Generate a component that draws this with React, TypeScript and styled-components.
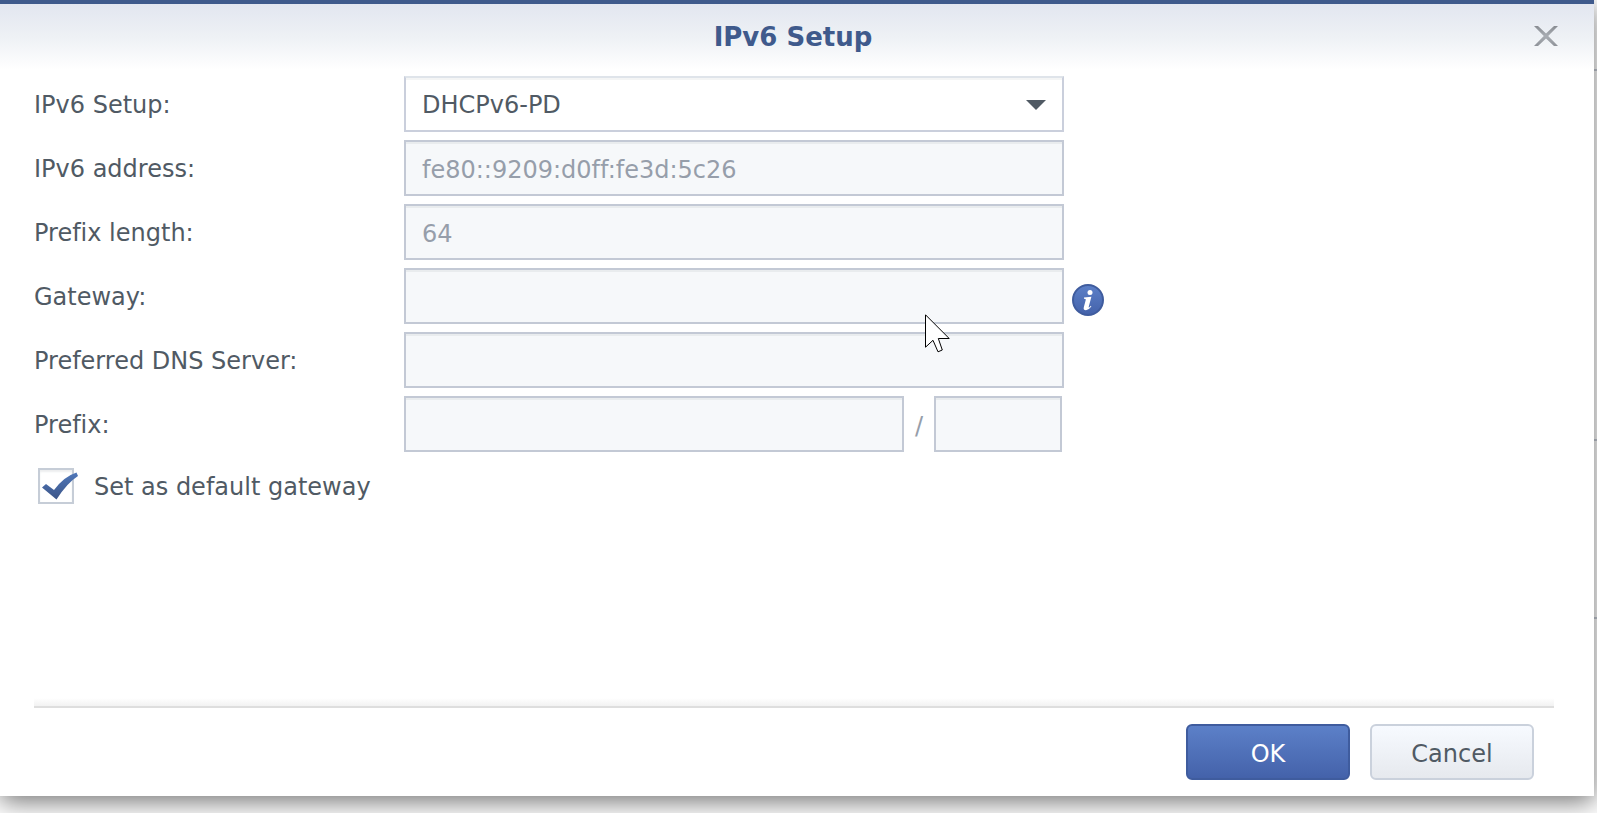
import React, { useState } from "react";
import styled, { createGlobalStyle, css } from "styled-components";

const GlobalStyle = createGlobalStyle`
  *, *::before, *::after { box-sizing: border-box; }
  body {
    margin: 0;
    background: #fff;
    color: #505a64;
    font-family: Verdana, "DejaVu Sans", sans-serif;
    font-size: 24px;
    line-height: 32px;
    font-variant-ligatures: none;
  }
  button, input, select { font: inherit; font-variant-ligatures: none; }
`;

const Page = styled.div`
  display: flex;
  min-height: 100vh;
  padding-bottom: 17px;
  overflow: hidden;
`;

const Dialog = styled.section`
  position: relative;
  z-index: 1;
  flex: 1;
  min-width: 0;
  display: flex;
  flex-direction: column;
  background: #fff;
  border-top: 4px solid #3f5a8c;
  box-shadow: 0 6px 24px rgba(0, 0, 0, 0.54);
`;

/* The sliver of the covered window that shows beside the dialog. */
const Backdrop = styled.div`
  width: 3px;
  display: flex;
  flex-direction: column;
`;

const BackdropSection = styled.div<{ $grow: number }>`
  flex: ${(p) => p.$grow} 0 0;
  border-bottom: 2px solid #c6ccd6;
  &:last-child { border-bottom: 0; }
`;

const Header = styled.header`
  display: grid;
  grid-template-columns: 72px 1fr 64px;
  align-items: center;
  height: 66px;
  padding: 0 16px 2px 0;
  background: linear-gradient(#e2e6f0, #eef1f5 50%, #fff);
`;

const Title = styled.h1`
  grid-column: 2;
  margin: 0;
  padding-top: 2px;
  color: #3f5a8c;
  font-size: 26px;
  line-height: 32px;
  text-align: center;
`;

const CloseButton = styled.button`
  display: flex;
  justify-content: center;
  padding: 8px;
  border: 0;
  background: none;
  cursor: pointer;
`;

const Form = styled.form`
  flex: 1;
  display: flex;
  flex-direction: column;
`;

const Fields = styled.div`
  position: relative;
  display: grid;
  grid-template-columns: 370px minmax(0, 660px) auto;
  row-gap: 8px;
  padding: 6px 40px 0 34px;
  justify-content: start;
`;

const Label = styled.label`
  grid-column: 1;
  align-self: center;
  padding-top: 2px;
`;

const control = css`
  width: 100%;
  height: 56px;
  padding: 4px 16px 0;
  border: 2px solid #c3c9d5;
  border-radius: 0;
  outline: 0;
`;

const TextField = styled.input`
  ${control}
  background: #f6f8fa;
  color: #969eaa;
  box-shadow: inset 0 2px #e9ecee;
`;

const SelectWrap = styled.div`
  position: relative;
`;

const Select = styled.select`
  ${control}
  display: block;
  padding-top: 2px;
  appearance: none;
  background: #fff;
  color: #505a64;
  border-color: #dfe4ea #cacfdc #cacfdc;
  box-shadow: inset 0 2px #f4f5f5;
`;

const Arrow = styled.svg`
  position: absolute;
  right: 18px;
  top: 24px;
  pointer-events: none;
`;

const PrefixGroup = styled.div`
  display: grid;
  grid-template-columns: 1fr 30px 128px;
  align-items: center;
  padding-right: 2px;
  color: #969eaa;
  text-align: center;
`;

const Slash = styled.span`
  padding-top: 4px;
`;

const InfoButton = styled.button`
  align-self: center;
  display: flex;
  margin: 8px 0 0 8px;
  padding: 0;
  border: 0;
  background: none;
`;

const CheckRow = styled.label`
  display: flex;
  align-items: center;
  gap: 20px;
  align-self: flex-start;
  margin: 16px 0 0 38px;
  height: 36px;
`;

const CheckText = styled.span`
  padding-top: 2px;
`;

const CheckBox = styled.span`
  position: relative;
  width: 36px;
  height: 36px;
  svg { position: absolute; left: 4px; top: 4px; pointer-events: none; }
  input:not(:checked) + svg { display: none; }
`;

const CheckInput = styled.input`
  display: block;
  width: 36px;
  height: 36px;
  margin: 0;
  appearance: none;
  border: 2px solid #c6cdd7;
  background: #fff;
  box-shadow: inset 0 2px 2px #eceeef;
`;

const Footer = styled.footer`
  margin: auto 40px 0 34px;
  padding: 0 20px 16px 0;
  display: flex;
  flex-wrap: wrap;
  justify-content: flex-end;
  gap: 16px 20px;
  &::before {
    content: "";
    flex: 0 0 calc(100% + 20px);
    height: 10px;
    margin-right: -20px;
    border-bottom: 2px solid #dedede;
    background: linear-gradient(#fff, #f2f2f2);
  }
`;

const Button = styled.button<{ $primary?: boolean }>`
  width: 164px;
  height: 56px;
  padding: 4px 0 0;
  border: 2px solid ${(p) => (p.$primary ? "#3f5c9e" : "#cad1dc")};
  border-radius: 6px;
  background: ${(p) =>
    p.$primary ? "linear-gradient(#5c80c8, #4462aa)" : "linear-gradient(#f7faff, #e6e9ee)"};
  color: ${(p) => (p.$primary ? "#fff" : "#505a64")};
`;

const Pointer = styled.svg`
  position: absolute;
  left: 925px;
  top: 244px;
  pointer-events: none;
`;

function CloseIcon() {
  return (
    <svg width="24" height="20" viewBox="0 0 24 20" aria-hidden="true">
      <defs>
        <linearGradient id="close" x1="0" y1="0" x2="0" y2="1">
          <stop offset="0" stopColor="#888c92" />
          <stop offset="0.5" stopColor="#a9adb3" />
          <stop offset="1" stopColor="#8f9399" />
        </linearGradient>
      </defs>
      <path
        d="M0 0H4L12 7.6 20 0H24L14.2 10 24 20H20L12 12.4 4 20H0L9.8 10Z"
        fill="url(#close)"
      />
    </svg>
  );
}

function InfoIcon() {
  return (
    <svg width="32" height="32" viewBox="0 0 32 32" aria-hidden="true">
      <defs>
        <linearGradient id="info" x1="0" y1="0" x2="0" y2="1">
          <stop offset="0" stopColor="#5c80c8" />
          <stop offset="1" stopColor="#4462aa" />
        </linearGradient>
      </defs>
      <circle cx="16" cy="16" r="15" fill="url(#info)" stroke="#3f5c9e" strokeWidth="2" />
      <circle cx="18" cy="8.4" r="2.5" fill="#fff" />
      <path
        d="M12 13.6 19.4 12.8 16.8 22.4Q16.4 24 17.2 23.4L18.8 21.8 19.4 22.6Q16.8 26.2 14 26.2 11 26.2 11.8 23.2L13.8 15.8Q14 14.8 12 14.8Z"
        fill="#fff"
      />
    </svg>
  );
}

function CheckIcon() {
  return (
    <svg width="36" height="28" viewBox="0 0 36 28" aria-hidden="true">
      <defs>
        <linearGradient id="check" x1="0" y1="0" x2="0" y2="1">
          <stop offset="0" stopColor="#5078ba" />
          <stop offset="1" stopColor="#3c5588" />
        </linearGradient>
      </defs>
      <path
        d="M0 15.5 4 12 12 18Q22 4.5 34.5 0.5L36 4Q25 11 14.5 27.5Z"
        fill="url(#check)"
      />
    </svg>
  );
}

export default function App() {
  const [mode, setMode] = useState("DHCPv6-PD");
  const [isDefault, setIsDefault] = useState(true);

  return (
    <>
      <GlobalStyle />
      <Page>
        <Dialog role="dialog" aria-labelledby="dialog-title">
          <Header>
            <Title id="dialog-title">IPv6 Setup</Title>
            <CloseButton type="button" aria-label="Close">
              <CloseIcon />
            </CloseButton>
          </Header>
          <Form onSubmit={(e) => e.preventDefault()}>
            <Fields>
              <Label htmlFor="mode">IPv6 Setup:</Label>
              <SelectWrap>
                <Select id="mode" value={mode} onChange={(e) => setMode(e.target.value)}>
                  <option>DHCPv6-PD</option>
                </Select>
                <Arrow width="20" height="10" viewBox="0 0 20 10" aria-hidden="true">
                  <path d="M0 0H20L10 10Z" fill="#505a64" />
                </Arrow>
              </SelectWrap>

              <Label htmlFor="address">IPv6 address:</Label>
              <TextField id="address" readOnly value="fe80::9209:d0ff:fe3d:5c26" />

              <Label htmlFor="length">Prefix length:</Label>
              <TextField id="length" readOnly value="64" />

              <Label htmlFor="gateway">Gateway:</Label>
              <TextField id="gateway" readOnly />
              <InfoButton type="button" aria-label="Gateway information">
                <InfoIcon />
              </InfoButton>

              <Label htmlFor="dns">Preferred DNS Server:</Label>
              <TextField id="dns" readOnly />

              <Label htmlFor="prefix">Prefix:</Label>
              <PrefixGroup>
                <TextField id="prefix" readOnly />
                <Slash>/</Slash>
                <TextField aria-label="Prefix size" readOnly />
              </PrefixGroup>

              <Pointer width="26" height="40" viewBox="0 0 26 40" aria-hidden="true">
                <path
                  d="M0.5 0.8V33.2L8 26.3 13 37.8 17.3 36 13.3 24.5H24.2Z"
                  fill="#fff"
                  stroke="#000"
                />
              </Pointer>
            </Fields>

            <CheckRow>
              <CheckBox>
                <CheckInput
                  type="checkbox"
                  checked={isDefault}
                  onChange={(e) => setIsDefault(e.target.checked)}
                />
                <CheckIcon />
              </CheckBox>
              <CheckText>Set as default gateway</CheckText>
            </CheckRow>

            <Footer>
              <Button type="submit" $primary>
                OK
              </Button>
              <Button type="button">Cancel</Button>
            </Footer>
          </Form>
        </Dialog>
        <Backdrop>
          <BackdropSection $grow={70} />
          <BackdropSection $grow={370} />
          <BackdropSection $grow={178} />
          <BackdropSection $grow={178} />
        </Backdrop>
      </Page>
    </>
  );
}
